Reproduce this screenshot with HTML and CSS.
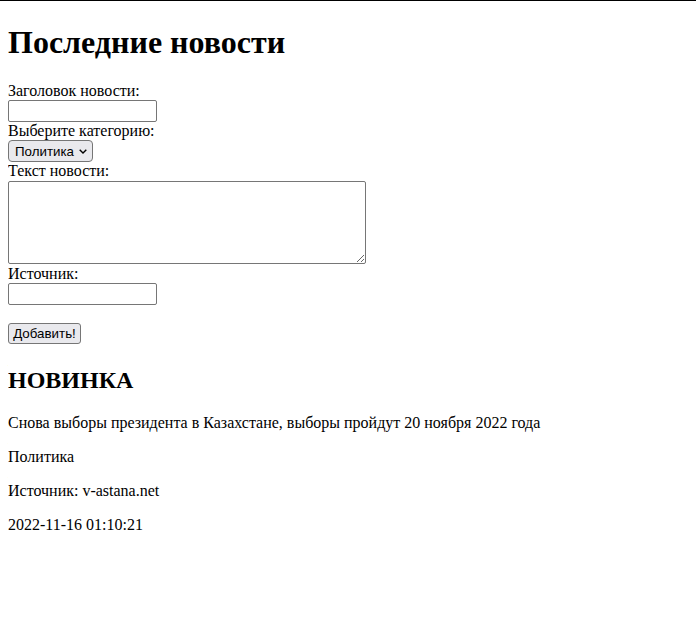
FILE: index.html
```html
<!DOCTYPE html>
<html lang="ru">
<head>
<meta charset="utf-8">
<title>Последние новости</title>
<link rel="stylesheet" href="styles.css">
</head>
<body class="page">
<h1 class="title">Последние новости</h1>
<form class="news-form">
<label class="lbl" for="t">Заголовок новости:</label><br>
<input class="field" id="t" type="text"><br>
<label class="lbl" for="c">Выберите категорию:</label><br>
<select class="choice" id="c"><option>Политика</option></select><br>
<label class="lbl" for="x">Текст новости:</label><br>
<textarea class="area" id="x"></textarea><br>
<label class="lbl" for="s">Источник:</label><br>
<input class="field" id="s" type="text"><br><br>
<button class="btn" type="button">Добавить!</button>
</form>
<h2 class="subtitle">НОВИНКА</h2>
<p class="para">Снова выборы президента в Казахстане, выборы пройдут 20 ноября 2022 года</p>
<p class="para">Политика</p>
<p class="para">Источник: v-astana.net</p>
<p class="para">2022-11-16 01:10:21</p>
</body>
</html>
```

FILE: styles.css
```css
html { border-top: 1px solid #000; }
.page {
  margin: 8px;
  font-family: "Liberation Serif", "Times New Roman", serif;
  font-size: 16px;
  line-height: 18px;
  color: #000;
  background: #fff;
}
.title { font-size: 32px; line-height: 37px; margin: 15px 0 21px; }
.subtitle { font-size: 24px; line-height: 28px; margin: 22px 0 20px; }
.para { margin: 16px 0; }
.news-form { margin: 0; }
.field {
  box-sizing: border-box;
  width: 149px;
  height: 22px;
  border: 1px solid #767676;
  border-radius: 2px;
  padding: 1px 2px;
  font: 13.33px "Liberation Sans", Arial, sans-serif;
  margin: 0;
}
.choice {
  -webkit-appearance: none;
  appearance: none;
  box-sizing: border-box;
  height: 22px;
  width: 85px;
  padding: 0 0 0 6px;
  border: 1px solid #767676;
  border-radius: 4px;
  background-color: #e9e9ed;
  background-image: url("data:image/svg+xml;utf8,<svg xmlns='http://www.w3.org/2000/svg' width='8' height='5' viewBox='0 0 8 5'><path d='M0.7 0.7 L4 4 L7.3 0.7' fill='none' stroke='%23000' stroke-width='1.4'/></svg>");
  background-repeat: no-repeat;
  background-position: 70px 8px;
  font: 13.33px "Liberation Sans", Arial, sans-serif;
  color: #000;
  margin: 0;
}
.area {
  box-sizing: border-box;
  width: 358px;
  height: 83px;
  border: 1px solid #767676;
  border-radius: 2px;
  margin: 1px 0 1px;
  vertical-align: bottom;
  font: 13.33px "Liberation Mono", monospace;
}
.btn {
  box-sizing: border-box;
  width: 73px;
  height: 21px;
  padding: 0;
  border: 1px solid #767676;
  border-radius: 3px;
  background: #e9e9ed;
  font: 13.33px "Liberation Sans", Arial, sans-serif;
  color: #000;
  margin: 0;
}
```
